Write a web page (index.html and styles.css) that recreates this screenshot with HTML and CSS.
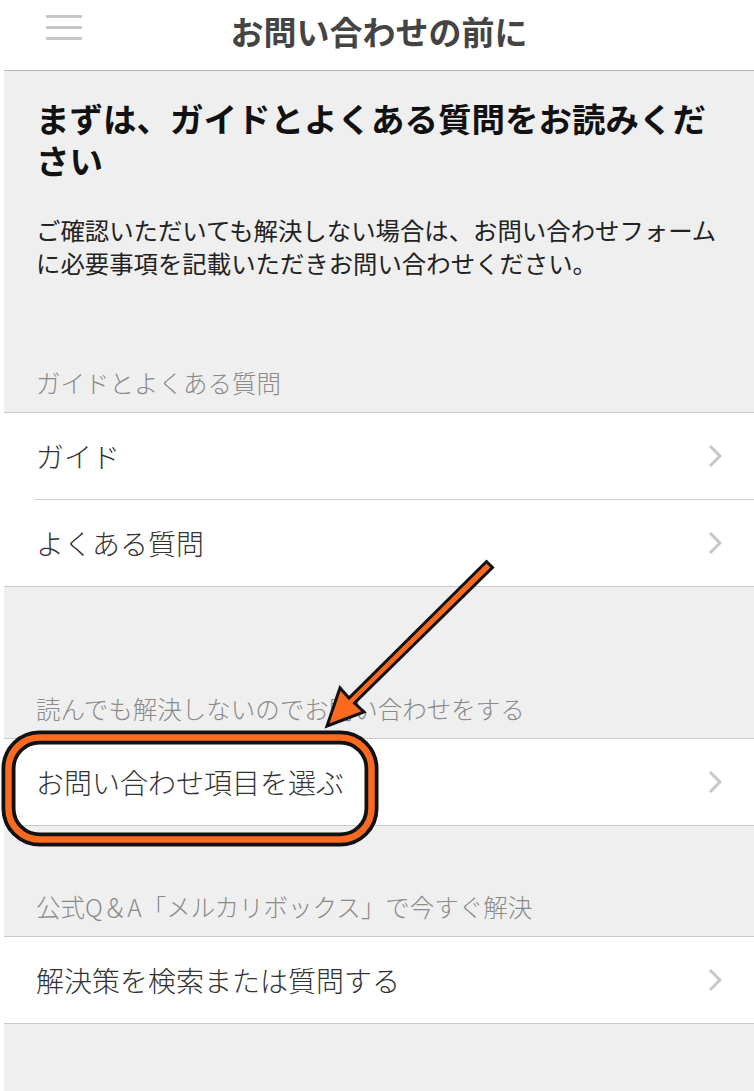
FILE: index.html
```html
<!DOCTYPE html>
<html lang="ja">

<head>
    <meta charset="UTF-8">
    <title>お問い合わせの前に</title>
    <link rel="stylesheet" href="styles.css">
</head>

<body>
    <div class="page">
        <header class="topbar">
            <div class="menu">
                <span></span>
                <span></span>
                <span></span>
            </div>
            <h1 class="title">お問い合わせの前に</h1>
            <div></div>
        </header>

        <section class="intro">
            <h2>まずは、ガイドとよくある質問をお読みください</h2>
            <p>ご確認いただいても解決しない場合は、お問い合わせフォームに必要事項を記載いただきお問い合わせください。</p>
        </section>

        <div class="label">ガイドとよくある質問</div>
        <ul class="group">
            <li class="row">
                <span>ガイド</span>
                <svg class="chev" width="14" height="24" viewBox="0 0 14 24"><polyline points="2,2 12,12 2,22" /></svg>
            </li>
            <li class="row">
                <span>よくある質問</span>
                <svg class="chev" width="14" height="24" viewBox="0 0 14 24"><polyline points="2,2 12,12 2,22" /></svg>
            </li>
        </ul>

        <div class="label label-far">読んでも解決しないのでお問い合わせをする</div>
        <ul class="group">
            <li class="row">
                <span>お問い合わせ項目を選ぶ</span>
                <svg class="chev" width="14" height="24" viewBox="0 0 14 24"><polyline points="2,2 12,12 2,22" /></svg>
            </li>
        </ul>

        <div class="label label-mid">公式Q＆A「メルカリボックス」で今すぐ解決</div>
        <ul class="group">
            <li class="row">
                <span>解決策を検索または質問する</span>
                <svg class="chev" width="14" height="24" viewBox="0 0 14 24"><polyline points="2,2 12,12 2,22" /></svg>
            </li>
        </ul>
    </div>

    <!-- 手書きの矢印と囲み -->
    <svg class="marks" width="754" height="1091" viewBox="0 0 754 1091">
        <rect x="8.5" y="737.5" width="363" height="102" rx="31" fill="none" stroke="#111" stroke-width="14" />
        <rect x="8.5" y="737.5" width="363" height="102" rx="31" fill="none" stroke="#fb6a1e" stroke-width="6.5" />
        <polygon points="327,726 364,712 354.5,703 492.5,567.5 486.5,561.5 349,698 340,688"
            fill="#fb6a1e" stroke="#111" stroke-width="3" stroke-linejoin="miter" />
    </svg>
</body>

</html>
```

FILE: styles.css
```css
* {
    margin: 0;
    padding: 0;
    box-sizing: border-box;
}

body {
    position: relative;
    background: #fff;
    font-family: "Noto Sans CJK JP", "Noto Sans", sans-serif;
    color: #333;
}

ul {
    list-style: none;
}

.page {
    margin-left: 4px;
    min-height: 1091px;
    background: #efefef;
}

.topbar {
    display: grid;
    grid-template-columns: 1fr auto 1fr;
    height: 71px;
    background: #fff;
    border-bottom: 1px solid #b8b8b8;
}

.menu {
    display: flex;
    flex-direction: column;
    gap: 8px;
    width: 36px;
    margin: 15px 0 0 42px;
}

.menu span {
    display: block;
    height: 3px;
    background: #c6c6cb;
}

.title {
    padding-top: 10px;
    font-size: 33px;
    line-height: 42px;
    font-weight: 700;
    color: #444;
}

.intro {
    padding: 26px 32px 0;
}

.intro h2 {
    font-size: 33.5px;
    line-height: 42px;
    font-weight: 700;
    color: #111;
}

.intro p {
    margin-top: 32px;
    font-size: 24.4px;
    line-height: 33px;
    color: #222;
}

.label {
    padding: 87px 32px 12px;
    font-size: 24.5px;
    line-height: 34px;
    font-weight: 300;
    color: #8a8a8a;
}

.label-far {
    padding-top: 105px;
}

.label-mid {
    padding-top: 64px;
}

.group {
    background: #fff;
    border-top: 1px solid #c9c9c9;
    border-bottom: 1px solid #c9c9c9;
}

.row {
    display: flex;
    align-items: center;
    justify-content: space-between;
    height: 86px;
    margin-left: 30px;
    padding: 0 32px 0 2px;
    font-size: 28px;
    font-weight: 300;
    color: #333;
}

.row+.row {
    height: 87px;
    border-top: 1px solid #d2d2d2;
}

.chev polyline {
    fill: none;
    stroke: #c7c7cc;
    stroke-width: 3;
}

.marks {
    position: absolute;
    top: 0;
    left: 0;
    pointer-events: none;
}
```
